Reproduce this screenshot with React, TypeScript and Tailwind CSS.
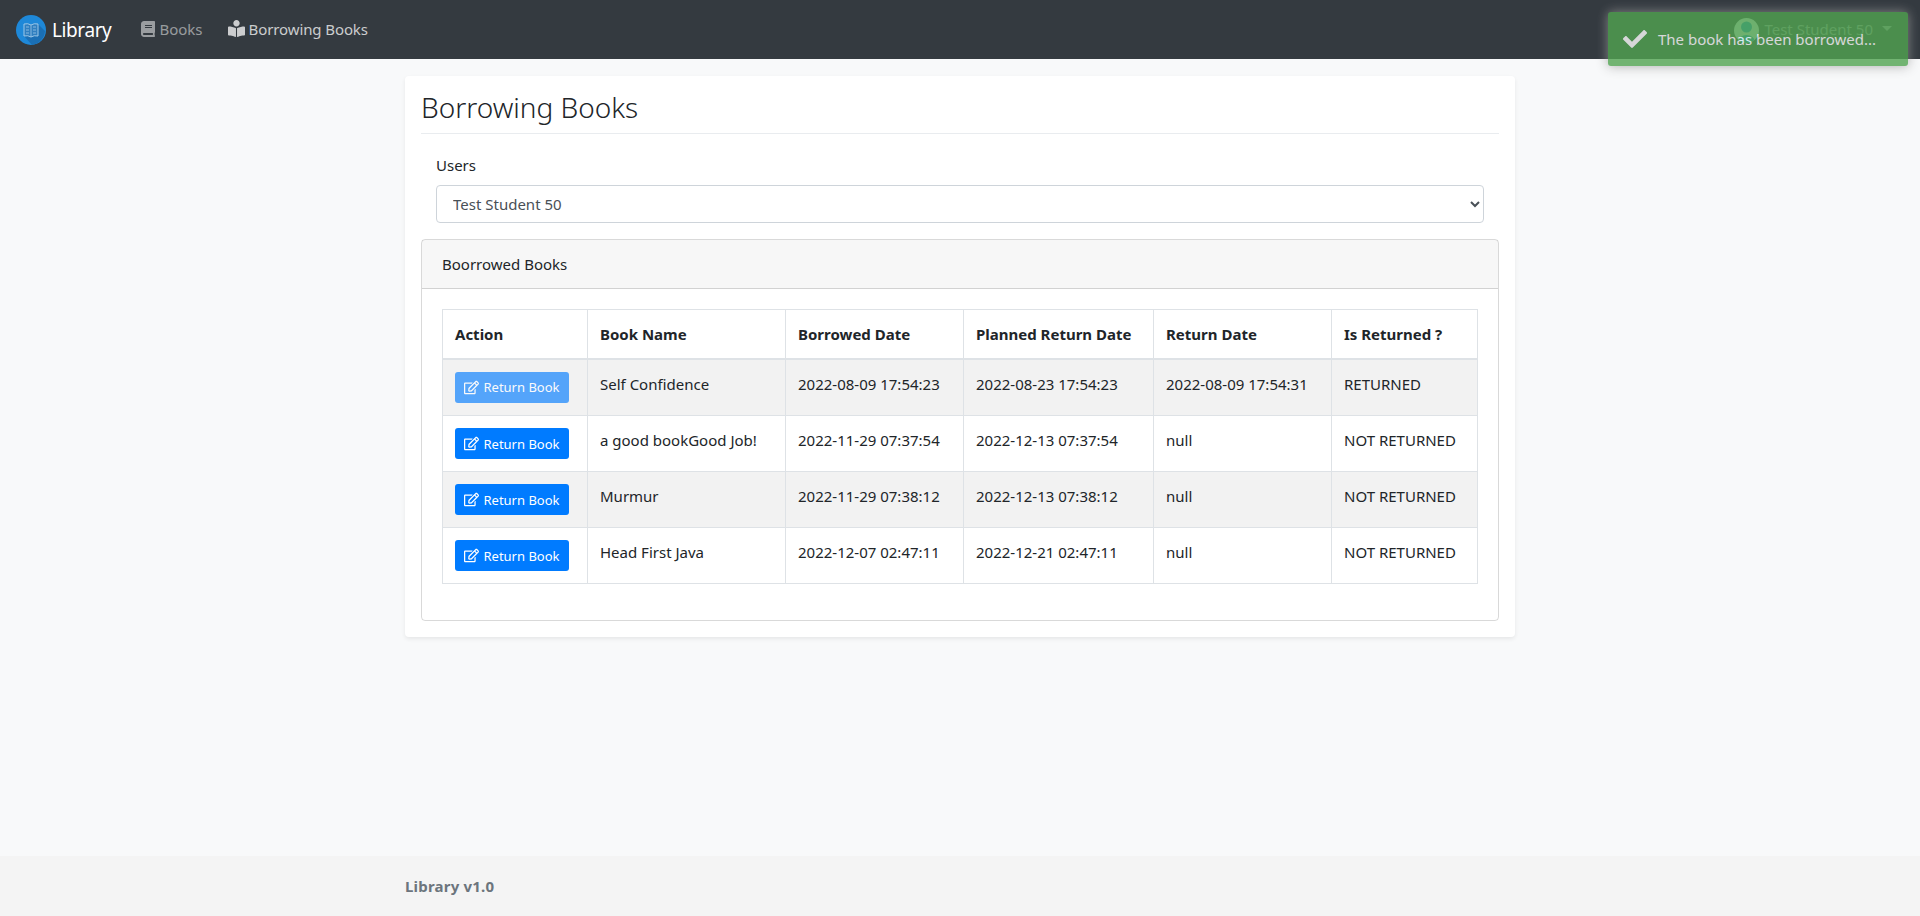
import React from "react";
import { FaBook, FaBookReader, FaCheck, FaRegEdit } from "react-icons/fa";

const rows = [
  ["Self Confidence", "2022-08-09 17:54:23", "2022-08-23 17:54:23", "2022-08-09 17:54:31", "RETURNED"],
  ["a good bookGood Job!", "2022-11-29 07:37:54", "2022-12-13 07:37:54", "null", "NOT RETURNED"],
  ["Murmur", "2022-11-29 07:38:12", "2022-12-13 07:38:12", "null", "NOT RETURNED"],
  ["Head First Java", "2022-12-07 02:47:11", "2022-12-21 02:47:11", "null", "NOT RETURNED"],
];

function Logo() {
  return (
    <svg width="30" height="30" viewBox="0 0 30 30" className="shrink-0">
      <circle cx="15" cy="15" r="15" fill="#1e88d8" />
      <path d="M8 21 L22 9 L29 16 A15 15 0 0 1 16 30 Z" fill="#1a6fb5" />
      <path d="M8 9 Q12 8 15 10 Q18 8 22 9 V21 Q18 20 15 22 Q12 20 8 21 Z" fill="#2f7fc0" stroke="#9cc8e8" strokeWidth="1" />
      <path d="M15 10 V22 M10 12 H13 M10 15 H13 M10 18 H13 M17 12 H20 M17 15 H20 M17 18 H20" stroke="#9cc8e8" strokeWidth="0.8" fill="none" />
    </svg>
  );
}

function Avatar() {
  return (
    <svg width="25" height="25" viewBox="0 0 25 25" className="shrink-0">
      <defs>
        <clipPath id="avatar-clip">
          <circle cx="12.5" cy="12.5" r="12.5" />
        </clipPath>
      </defs>
      <circle cx="12.5" cy="12.5" r="12.5" fill="#dfe6e6" />
      <g clipPath="url(#avatar-clip)" fill="#1e96c8">
        <circle cx="12.5" cy="9" r="5.5" />
        <ellipse cx="12.5" cy="23" rx="8" ry="6" />
      </g>
    </svg>
  );
}

export default function App() {
  return (
    <div className="min-h-[916px] flex flex-col bg-[#f8f9fa] text-[#212529] text-[15px] leading-6 font-['Noto_Sans',sans-serif]">
      <nav className="h-[59px] bg-[#343a40] flex items-center pl-4 pr-[28px] shrink-0">
        <Logo />
        <span className="ml-[6px] text-[19px] tracking-[-0.4px] text-white">Library</span>
        <a className="ml-[29px] pb-[2px] flex items-center gap-[3px] text-white/50">
          <FaBook className="text-[16px]" />
          Books
        </a>
        <a className="ml-[25px] pb-[2px] flex items-center gap-[4px] text-white/75 tracking-[-0.1px]">
          <FaBookReader className="text-[17px]" />
          Borrowing Books
        </a>
        <div className="ml-auto flex items-center text-white/50">
          <div className="mt-[1px] mr-[5px]">
            <Avatar />
          </div>
          <span className="pb-[2px]">Test Student 50</span>
          <span className="ml-[9px] mb-[2px] border-x-[5px] border-t-[5px] border-x-transparent border-t-white/50" />
        </div>
      </nav>

      <main className="flex-1 w-[1110px] mx-auto pt-[17px]">
        <section className="bg-white rounded-[4px] shadow-[0_2px_4px_rgba(0,0,0,0.075)] px-4 pb-4 h-[561px]">
          <h1 className="text-[28px] leading-[34px] h-[58px] pt-[14px] border-b border-[#e9ecef] font-light">Borrowing Books</h1>
          <div className="px-[15px] pt-[19px]">
            <label className="block h-[32px]">Users</label>
            <select className="block w-full h-[38px] pl-[12px] pr-[4px] bg-white border border-[#ced4da] rounded-[4px] text-[#495057]">
              <option>Test Student 50</option>
            </select>
          </div>
          <div className="mt-4 h-[382px] border border-black/15 rounded-[4px]">
            <div className="h-[49px] px-5 flex items-center bg-black/[.03] border-b border-black/15">Boorrowed Books</div>
            <div className="pt-5 px-5">
              <table className="w-[1035px] table-fixed border-collapse border border-[#dee2e6]">
                <colgroup>
                  <col className="w-[145px]" />
                  <col className="w-[198px]" />
                  <col className="w-[178px]" />
                  <col className="w-[190px]" />
                  <col className="w-[178px]" />
                  <col className="w-[146px]" />
                </colgroup>
                <thead>
                  <tr className="h-[49px] border-b-2 border-[#dee2e6] text-left">
                    {["Action", "Book Name", "Borrowed Date", "Planned Return Date", "Return Date", "Is Returned ?"].map((h) => (
                      <th key={h} className="px-3 font-bold border-x border-[#dee2e6]">{h}</th>
                    ))}
                  </tr>
                </thead>
                <tbody>
                  {rows.map((r, i) => (
                    <tr key={r[0]} className={`border-b border-[#dee2e6] ${i === 0 ? "h-[57px]" : "h-[56px]"} ${i % 2 === 0 ? "bg-[#f2f2f2]" : ""}`}>
                      <td className="px-3 pt-3 align-top border-x border-[#dee2e6]">
                        <button className={`w-[114px] h-[31px] rounded-[3px] bg-[#007bff] text-white text-[13px] flex items-center justify-center gap-1 ${i === 0 ? "opacity-65" : ""}`}>
                          <FaRegEdit className="text-[15px]" />
                          Return Book
                        </button>
                      </td>
                      {r.map((c, j) => (
                        <td key={j} className="px-3 pt-3 align-top border-x border-[#dee2e6] whitespace-nowrap">{c}</td>
                      ))}
                    </tr>
                  ))}
                </tbody>
              </table>
            </div>
          </div>
        </section>
      </main>

      <footer className="h-[60px] bg-[#f4f4f4] shrink-0">
        <div className="w-[1110px] mx-auto h-full flex items-center font-bold text-[#6c757d] tracking-[0.2px]">Library v1.0</div>
      </footer>

      <div className="absolute top-3 right-3 w-[300px] h-[54px] rounded-[3px] bg-[#51a351] opacity-80 shadow-[0_0_12px_#999] text-white flex items-center pl-[15px] gap-[11px]">
        <FaCheck className="text-[24px]" />
        <span>The book has been borrowed...</span>
      </div>
    </div>
  );
}
